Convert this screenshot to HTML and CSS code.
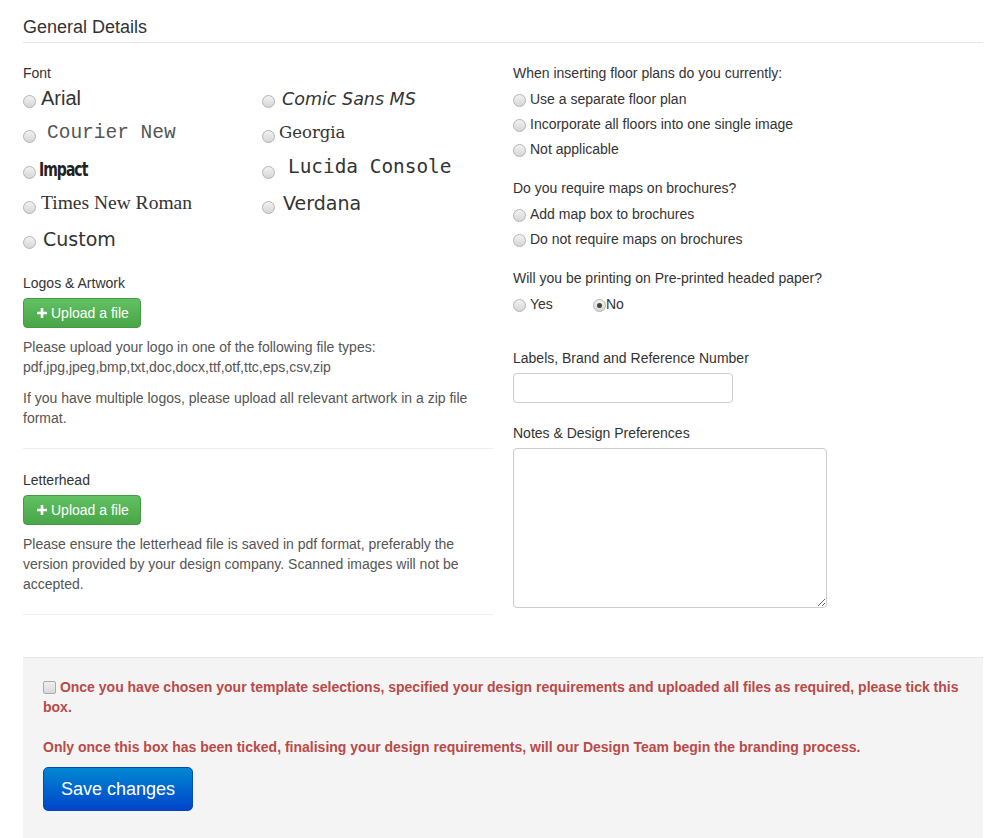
FILE: index.html
```html
<!DOCTYPE html>
<html>
<head>
<meta charset="utf-8">
<link rel="stylesheet" href="styles.css">
</head>
<body>
<div class="page">
  <h2 class="title">General Details</h2>
  <div class="cols">
    <div class="col left">
      <div class="label">Font</div>
      <div class="font-grid">
        <label class="font-opt"><input type="radio" name="font"><span class="f-arial">Arial</span></label>
        <label class="font-opt"><input type="radio" name="font"><span class="f-comic">Comic Sans MS</span></label>
        <label class="font-opt"><input type="radio" name="font"><span class="f-courier">Courier New</span></label>
        <label class="font-opt"><input type="radio" name="font"><span class="f-georgia">Georgia</span></label>
        <label class="font-opt"><input type="radio" name="font"><span class="f-impact">Impact</span></label>
        <label class="font-opt"><input type="radio" name="font"><span class="f-lucida">Lucida Console</span></label>
        <label class="font-opt"><input type="radio" name="font"><span class="f-times">Times New Roman</span></label>
        <label class="font-opt"><input type="radio" name="font"><span class="f-verdana">Verdana</span></label>
        <label class="font-opt"><input type="radio" name="font"><span class="f-custom">Custom</span></label>
      </div>

      <div class="section logos">
        <div class="label">Logos &amp; Artwork</div>
        <button class="btn-upload" type="button"><svg class="plus" viewBox="0 0 12 12" width="12" height="12"><path d="M6 1v10M1 6h10" stroke="#fff" stroke-width="2.6"/></svg>Upload a file</button>
        <p class="help">Please upload your logo in one of the following file types: pdf,jpg,jpeg,bmp,txt,doc,docx,ttf,otf,ttc,eps,csv,zip</p>
        <p class="help">If you have multiple logos, please upload all relevant artwork in a zip file format.</p>
      </div>
      <hr class="sep">
      <div class="section letterhead">
        <div class="label">Letterhead</div>
        <button class="btn-upload" type="button"><svg class="plus" viewBox="0 0 12 12" width="12" height="12"><path d="M6 1v10M1 6h10" stroke="#fff" stroke-width="2.6"/></svg>Upload a file</button>
        <p class="help">Please ensure the letterhead file is saved in pdf format, preferably the version provided by your design company. Scanned images will not be accepted.</p>
      </div>
      <hr class="sep">
    </div>

    <div class="col right">
      <div class="group">
        <div class="label">When inserting floor plans do you currently:</div>
        <div class="radios">
          <label class="opt"><input type="radio" name="fp">Use a separate floor plan</label>
          <label class="opt"><input type="radio" name="fp">Incorporate all floors into one single image</label>
          <label class="opt"><input type="radio" name="fp">Not applicable</label>
        </div>
      </div>
      <div class="group">
        <div class="label">Do you require maps on brochures?</div>
        <div class="radios">
          <label class="opt"><input type="radio" name="maps">Add map box to brochures</label>
          <label class="opt"><input type="radio" name="maps">Do not require maps on brochures</label>
        </div>
      </div>
      <div class="group">
        <div class="label">Will you be printing on Pre-printed headed paper?</div>
        <div class="radios inline">
          <label class="opt yes"><input type="radio" name="pp">Yes</label>
          <label class="opt"><input type="radio" name="pp" checked>No</label>
        </div>
      </div>
      <div class="field ref">
        <div class="label">Labels, Brand and Reference Number</div>
        <input class="text-input" type="text">
      </div>
      <div class="field notes">
        <div class="label">Notes &amp; Design Preferences</div>
        <textarea class="notes-area"></textarea>
      </div>
    </div>
  </div>

  <div class="actions">
    <p class="warn"><input type="checkbox" class="tick"> Once you have chosen your template selections, specified your design requirements and uploaded all files as required, please tick this box.</p>
    <p class="warn second">Only once this box has been ticked, finalising your design requirements, will our Design Team begin the branding process.</p>
    <button class="btn-save" type="button">Save changes</button>
  </div>
</div>
</body>
</html>
```

FILE: styles.css
```css
* { box-sizing: border-box; }
html, body { margin: 0; padding: 0; background: #fff; }
body {
  font-family: "Liberation Sans", Arial, sans-serif;
  font-size: 14px;
  line-height: 20px;
  color: #333;
}
.page {
  width: 960px;
  margin-left: 23px;
}
.title {
  margin: 0;
  padding-top: 17px;
  padding-bottom: 5px;
  font-size: 18px;
  line-height: 20px;
  font-weight: normal;
  color: #333;
  border-bottom: 1px solid #e5e5e5;
}
.cols {
  display: grid;
  grid-template-columns: 470px 470px;
  column-gap: 20px;
  margin-top: 20px;
}
.label { line-height: 20px; color: #333; }

/* radio look */
input[type="radio"] {
  -webkit-appearance: none;
  appearance: none;
  width: 13px;
  height: 13px;
  margin: 0;
  border: 1px solid #b4b4b4;
  border-radius: 50%;
  background: linear-gradient(#f2f2f2, #d6d6d6);
  flex: none;
  position: relative;
}
input[type="radio"]:checked::after {
  content: "";
  position: absolute;
  left: 3px; top: 3px;
  width: 5px; height: 5px;
  border-radius: 50%;
  background: #444;
}

/* font grid */
.font-grid {
  display: grid;
  grid-template-columns: 239px 1fr;
  grid-auto-rows: 35.25px;
  margin-top: -2px;
}
.font-opt {
  display: flex;
  align-items: center;
  color: #333;
}
.font-opt input { margin-top: 6px; }
.font-opt span { margin-left: 5px; line-height: 24px; }
.f-arial { font-family: "Liberation Sans", Arial, sans-serif; font-size: 20px; margin-top: -1px; }
.f-comic { font-family: "Comic Sans MS", "DejaVu Sans", sans-serif; font-size: 17.5px; font-style: oblique 6deg; margin-left: 7px !important; }
.f-courier { font-family: "Liberation Mono", "Courier New", monospace; font-size: 19.5px; color: #555; margin-left: 11px !important; margin-top: -1px; }
.f-georgia { font-family: "DejaVu Serif", Georgia, serif; font-size: 16.5px; margin-left: 4px !important; margin-top: -2px; }
.f-impact { font-family: "DejaVu Sans Condensed", "DejaVu Sans", Impact, sans-serif; font-stretch: condensed; font-weight: bold; font-size: 19px; letter-spacing: -1.2px; transform: scaleX(0.82); transform-origin: left; margin-left: 3px !important; color: #222; }
.f-lucida { font-family: "DejaVu Sans Mono", "Lucida Console", monospace; font-size: 19.4px; margin-left: 13px !important; margin-top: -5px; }
.f-times { font-family: "Liberation Serif", "Times New Roman", serif; font-size: 19.5px; margin-left: 5px !important; margin-top: -2px; }
.f-verdana { font-family: "DejaVu Sans", Verdana, sans-serif; font-size: 19px; margin-left: 8px !important; margin-top: -3px; }
.f-custom { font-family: "DejaVu Sans", Verdana, sans-serif; font-size: 19px; margin-left: 7px !important; margin-top: -2px; }

.section.logos { margin-top: 16px; }
.btn-upload {
  display: flex;
  align-items: center;
  height: 30px;
  width: 118px;
  margin-top: 5px;
  padding: 0 0 0 12px;
  border: 1px solid #439a43;
  border-radius: 4px;
  background: linear-gradient(#62c162, #48a548);
  color: #fff;
  font-family: "Liberation Sans", Arial, sans-serif;
  font-size: 14px;
  cursor: pointer;
}
.plus { margin-right: 3px; }
.help {
  margin: 9px 0 0;
  color: #555;
  line-height: 20px;
}
.help + .help { margin-top: 11px; }
.sep {
  border: 0;
  border-top: 1px solid #eee;
  margin: 20px 0 0;
  height: 0;
}
.section.letterhead { margin-top: 21px; }

/* right column */
.group + .group { margin-top: 17px; }
.radios { margin-top: 3px; }
.opt {
  display: flex;
  align-items: center;
  height: 25px;
  color: #333;
}
.opt input { margin-right: 4px; margin-top: 4px; }
.radios.inline { display: flex; }
.opt.yes { width: 80px; }
.opt.yes input { margin-right: 4px; }
.radios.inline .opt:not(.yes) input { margin-right: 0; }
.field.ref { margin-top: 32px; }
.text-input {
  display: block;
  margin-top: 5px;
  width: 220px;
  height: 30px;
  border: 1px solid #ccc;
  border-radius: 4px;
  background: #fff;
}
.field.notes { margin-top: 20px; }
.notes-area {
  display: block;
  margin-top: 5px;
  width: 314px;
  height: 160px;
  border: 1px solid #ccc;
  border-radius: 4px;
  background: #fff;
  resize: both;
}

/* bottom */
.actions {
  margin-top: 42px;
  background: #f4f4f4;
  border-top: 1px solid #e6e6e6;
  padding: 19px 20px 30px;
  min-height: 200px;
}
.warn {
  margin: 0;
  color: #b94a48;
  font-weight: bold;
  line-height: 20px;
}
.warn.second { margin-top: 20px; }
.tick {
  -webkit-appearance: none;
  appearance: none;
  width: 13px;
  height: 13px;
  margin: 0;
  vertical-align: -2px;
  border: 1px solid #aaa;
  border-radius: 2px;
  background: linear-gradient(#f0f0f0, #d8d8d8);
}
.btn-save {
  display: block;
  margin-top: 10px;
  width: 150px;
  height: 44px;
  border: 1px solid #0049b0;
  border-radius: 5px;
  background: linear-gradient(#0088d0, #0044cc);
  color: #fff;
  font-family: "Liberation Sans", Arial, sans-serif;
  font-size: 18px;
  cursor: pointer;
}
```
